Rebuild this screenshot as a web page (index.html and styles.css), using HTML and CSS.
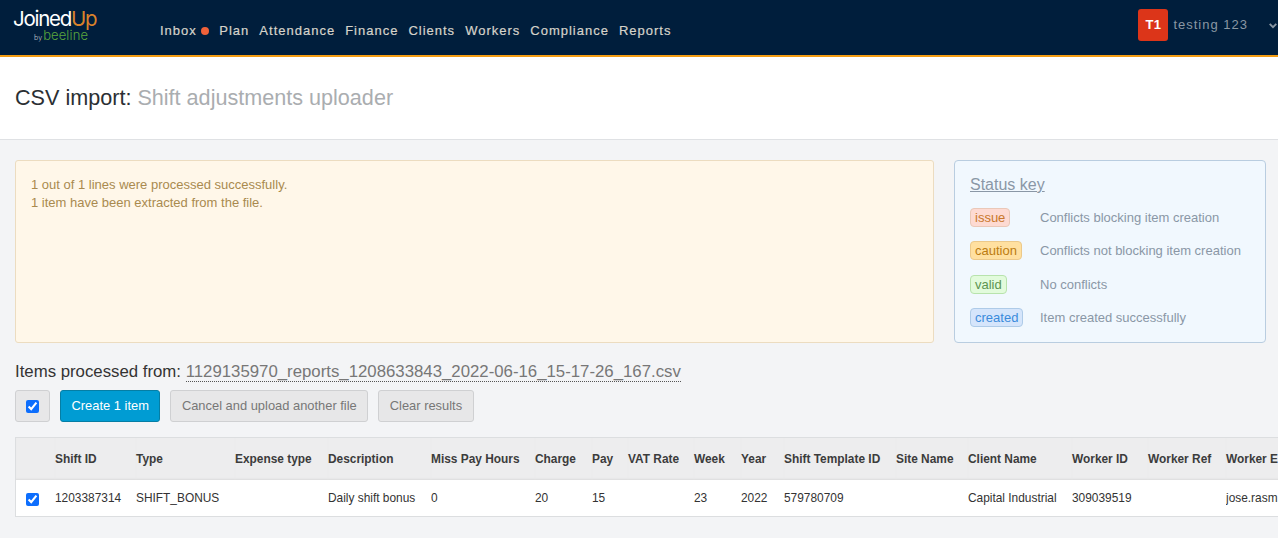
FILE: index.html
```html
<!DOCTYPE html>
<html lang="en">
<head>
<meta charset="utf-8">
<title>CSV import</title>
<link rel="stylesheet" href="styles.css">
</head>
<body>
<header class="topbar">
  <a class="logo">
    <span class="logo-main">Joined<span class="logo-up">Up</span></span>
    <span class="logo-sub"><span class="logo-by">by</span>beeline</span>
  </a>
  <nav class="nav">
    <a class="nav-item nav-inbox">Inbox<span class="dot"></span></a>
    <a class="nav-item">Plan</a>
    <a class="nav-item">Attendance</a>
    <a class="nav-item">Finance</a>
    <a class="nav-item">Clients</a>
    <a class="nav-item">Workers</a>
    <a class="nav-item">Compliance</a>
    <a class="nav-item">Reports</a>
  </nav>
  <div class="user">
    <span class="avatar">T1</span>
    <span class="user-name">testing 123</span>
    <svg class="chev" width="8" height="6" viewBox="0 0 8 6"><path d="M.7 .8 4 4.2 7.3 .8" fill="none" stroke="#8a97a3" stroke-width="1.8"/></svg>
  </div>
</header>
<section class="title-bar">
  <h1 class="title">CSV import: <span class="title-sub">Shift adjustments uploader</span></h1>
</section>
<main class="main">
  <div class="panels">
    <div class="alert">
      <p>1 out of 1 lines were processed successfully.</p>
      <p>1 item have been extracted from the file.</p>
    </div>
    <aside class="key">
      <h2 class="key-title">Status key</h2>
      <div class="key-grid">
        <div class="key-row"><span class="tag tag-issue">issue</span><span class="key-text">Conflicts blocking item creation</span></div>
        <div class="key-row"><span class="tag tag-caution">caution</span><span class="key-text">Conflicts not blocking item creation</span></div>
        <div class="key-row"><span class="tag tag-valid">valid</span><span class="key-text">No conflicts</span></div>
        <div class="key-row"><span class="tag tag-created">created</span><span class="key-text">Item created successfully</span></div>
      </div>
    </aside>
  </div>
  <div class="items-line">Items processed from: <span class="file">1129135970_reports_1208633843_2022-06-16_15-17-26_167.csv</span></div>
  <div class="toolbar">
    <label class="btn btn-check"><input type="checkbox" class="check" checked></label>
    <button class="btn btn-primary">Create 1 item</button>
    <button class="btn">Cancel and upload another file</button>
    <button class="btn">Clear results</button>
  </div>
  <div class="table-wrap">
    <table class="grid">
      <colgroup>
        <col class="c0"><col class="c1"><col class="c2"><col class="c3"><col class="c4"><col class="c5"><col class="c6"><col class="c7"><col class="c8"><col class="c9"><col class="c10"><col class="c11"><col class="c12"><col class="c13"><col class="c14"><col class="c15"><col class="c16">
      </colgroup>
      <thead>
        <tr>
          <th></th><th>Shift ID</th><th>Type</th><th>Expense type</th><th>Description</th><th>Miss Pay Hours</th><th>Charge</th><th>Pay</th><th>VAT Rate</th><th>Week</th><th>Year</th><th>Shift Template ID</th><th>Site Name</th><th>Client Name</th><th>Worker ID</th><th>Worker Ref</th><th>Worker E</th>
        </tr>
      </thead>
      <tbody>
        <tr>
          <td class="cell-check"><input type="checkbox" class="check" checked></td><td>1203387314</td><td>SHIFT_BONUS</td><td></td><td>Daily shift bonus</td><td>0</td><td>20</td><td>15</td><td></td><td>23</td><td>2022</td><td>579780709</td><td></td><td>Capital Industrial</td><td>309039519</td><td></td><td>jose.rasm</td>
        </tr>
      </tbody>
    </table>
  </div>
</main>
</body>
</html>
```
FILE: styles.css
```css
* { box-sizing: border-box; }
html, body { margin: 0; padding: 0; height: 538px; overflow: hidden; }
body { background: #f3f4f6; font-family: "Liberation Sans", Arial, sans-serif; font-size: 12px; color: #333; }

.topbar { height: 57px; background: #001e3c; border-bottom: 2px solid #f39c12; display: flex; align-items: flex-start; }
.logo { width: 160px; flex: none; padding: 9px 0 0 13px; display: flex; flex-direction: column; font-family: "Inter", sans-serif; }
.logo-main { font-size: 20.5px; font-weight: 400; line-height: 19px; letter-spacing: -1.25px; color: #fff; }
.logo-up { color: #d9822b; }
.logo-sub { font-size: 13px; line-height: 11px; margin-top: 2px; color: #5aa63c; font-weight: 300; margin-left: 21px; letter-spacing: 0.1px; }
.logo-by { font-size: 7px; color: #c5ccd3; margin-right: 1px; }
.nav { display: flex; gap: 10px; padding-top: 23px; }
.nav-item { font-size: 13px; line-height: 15px; letter-spacing: 1px; color: #d6d3ca; -webkit-text-stroke: 0.2px #d6d3ca; white-space: nowrap; }
.nav-inbox { display: flex; align-items: center; }
.dot { width: 8px; height: 8px; border-radius: 50%; background: #f0623a; margin-left: 4.5px; }
.user { margin-left: auto; display: flex; align-items: flex-start; padding-top: 9px; }
.avatar { width: 30px; height: 32px; background: #dc3519; border-radius: 3px; color: #fff; font-weight: 700; font-size: 13px; line-height: 31px; text-align: center; letter-spacing: 0.3px; }
.user-name { font-size: 13px; line-height: 15px; color: #8a97a3; letter-spacing: 1px; margin-left: 5px; margin-top: 8px; }
.chev { margin-left: 21px; margin-top: 14px; margin-right: 1px; }

.title-bar { height: 83px; background: #fff; border-bottom: 1px solid #dfe1e4; padding: 27px 15px 0; }
.title { margin: 0; font-size: 21.6px; line-height: 28px; font-weight: 400; color: #2b2f33; }
.title-sub { color: #aaadb0; }

.main { padding: 20px 0 0 15px; width: 1278px; }
.panels { display: flex; gap: 20px; height: 183px; }
.alert { width: 919px; flex: none; background: #fff7e9; border: 1px solid #ecdcc0; border-radius: 3px; padding: 15px 15px; color: #a98a4f; font-size: 13px; line-height: 18px; }
.alert p { margin: 0; }
.key { width: 312px; flex: none; background: #f1f8fe; border: 1px solid #b9cde0; border-radius: 4px; padding: 14px 15px 0; color: #8a97a6; }
.key-title { margin: 0 0 13px; font-size: 16px; line-height: 20px; font-weight: 400; text-decoration: underline; color: #8a97a6; }
.key-grid { display: flex; flex-direction: column; gap: 14.33px; }
.key-row { display: flex; align-items: center; height: 19px; font-size: 13px; width: 296px; }
.tag { display: inline-block; height: 19px; line-height: 18px; border: 1px solid; border-radius: 4px; padding: 0 4px; font-size: 13px; }
.key-text { margin-left: auto; width: 226px; flex: none; white-space: nowrap; }
.tag-issue { background: #fddad2; border-color: #eac8b8; color: #c9772a; }
.tag-caution { background: #ffe0a0; border-color: #ecc98a; color: #bc7c10; }
.tag-valid { background: #e2fbdc; border-color: #b8e3ad; color: #5d9450; }
.tag-created { background: #d5e5fb; border-color: #aecbe8; color: #3b8bdc; }

.items-line { margin-top: 19px; font-size: 16.8px; line-height: 19px; color: #333; white-space: nowrap; }
.file { color: #777; border-bottom: 1px dotted #555; }
.toolbar { display: flex; gap: 10px; margin-top: 9px; height: 32px; }
.btn { height: 32px; border: 1px solid #cfd0d2; border-radius: 3px; background: #e7e7e8; color: #777; font-family: inherit; font-size: 12.9px; padding: 0 10.5px 2px; display: flex; align-items: center; }
.btn-check { width: 35px; padding: 0 0 0 10px; }
.btn-primary { background: #009cd3; border-color: #057ea5; color: #fff; }
.check { width: 13px; height: 13px; margin: 0; accent-color: #0d6efd; }

.table-wrap { margin-top: 15px; width: 1263px; overflow: hidden; border: 1px solid #dcdee0; border-right: 0; background: #fff; }
.grid { border-collapse: collapse; table-layout: fixed; width: 1413px; font-size: 11.9px; }
.grid th { height: 42px; background: #ededee; text-align: left; font-weight: 700; color: #3c3c3c; padding: 0; white-space: nowrap; box-shadow: inset 0 -2px 2px -1px #dcdcdc; }
.grid td { height: 36px; padding: 0; color: #333; white-space: nowrap; overflow: hidden; }
.grid .cell-check { padding-left: 10px; }
.cell-check .check { display: block; margin-top: 3px; }
.c0 { width: 39px; } .c1 { width: 81px; } .c2 { width: 99px; } .c3 { width: 93px; } .c4 { width: 103px; }
.c5 { width: 104px; } .c6 { width: 57px; } .c7 { width: 36px; } .c8 { width: 66px; } .c9 { width: 47px; }
.c10 { width: 43px; } .c11 { width: 112px; } .c12 { width: 72px; } .c13 { width: 104px; } .c14 { width: 76px; }
.c15 { width: 78px; } .c16 { width: 203px; }
```
